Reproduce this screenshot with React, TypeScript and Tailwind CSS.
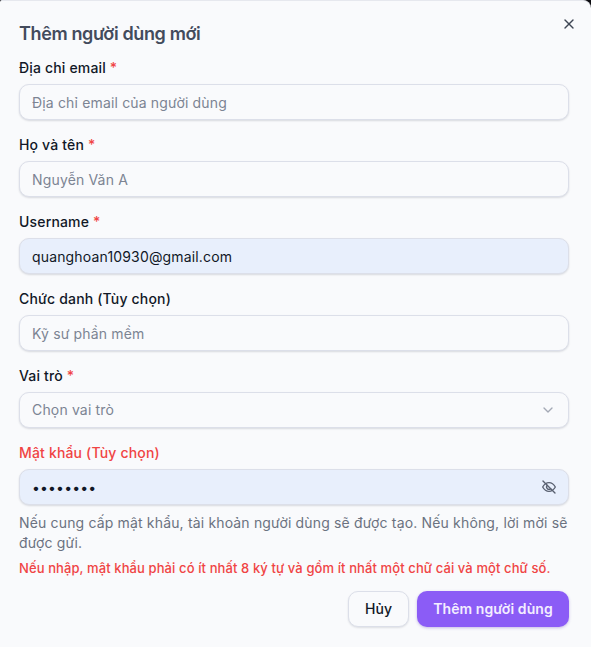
import { ChevronDown, X } from "lucide-react";

function Req() {
  return <span className="text-[#f04444]"> *</span>;
}

const inputBase =
  "h-9 w-full rounded-[10px] border border-[#dcdfe9] px-3 text-sm tracking-[0.16px] text-[#111827] shadow-[0_1px_2px_rgba(15,23,42,0.14)] outline-none placeholder:text-[#7c8493]";
const emptyInput = inputBase + " bg-[#f9fafc]";
const filledInput = inputBase + " bg-[#e8effc]";

function Field({ label, required, placeholder, value }: { label: string; required?: boolean; placeholder?: string; value?: string }) {
  return (
    <div className="flex flex-col gap-[6px]">
      <label className="text-sm leading-[20px] font-[450] tracking-[0.17px] text-[#111827]">
        {label}
        {required && <Req />}
      </label>
      <input className={value ? filledInput : emptyInput} placeholder={placeholder} defaultValue={value} />
    </div>
  );
}

export default function App() {
  return (
    <div className="h-[647px] w-[591px] overflow-hidden bg-[#0b0b0f] font-['Inter',sans-serif]">
      <div className="relative flex h-[647px] flex-col rounded-tl-[2px] rounded-tr-[8px] border-t border-[#e6e8ee] bg-[#f9fafc] px-[19px] pt-[21px]">
        <button className="absolute top-[15px] right-[14px] text-[#3f4654]" aria-label="Đóng">
          <X className="h-4 w-4" />
        </button>
        <h2 className="text-lg leading-[24px] font-semibold tracking-[-0.37px] text-[#434b5c]">Thêm người dùng mới</h2>
        <div className="mt-[12px] flex w-[550px] flex-col gap-[15px]">
          <Field label="Địa chỉ email" required placeholder="Địa chỉ email của người dùng" />
          <Field label="Họ và tên" required placeholder="Nguyễn Văn A" />
          <Field label="Username" required value="quanghoan10930@gmail.com" />
          <Field label="Chức danh (Tùy chọn)" placeholder="Kỹ sư phần mềm" />
          <div className="flex flex-col gap-[6px]">
            <label className="text-sm leading-[20px] font-[450] tracking-[0.17px] text-[#111827]">
              Vai trò
              <Req />
            </label>
            <button className="flex h-9 w-full items-center justify-between rounded-[10px] border border-[#dcdfe9] bg-[#f9fafc] px-3 text-sm tracking-[0.16px] text-[#7c8493] shadow-[0_1px_2px_rgba(15,23,42,0.14)]">
              Chọn vai trò
              <ChevronDown className="h-4 w-4 text-[#a3a9b5]" />
            </button>
          </div>
          <div className="flex flex-col gap-[6px]">
            <label className="text-sm leading-[20px] font-[450] tracking-[0.17px] text-[#f04444]">Mật khẩu (Tùy chọn)</label>
            <div className="relative">
              <input type="password" className={filledInput} defaultValue="12345678" />
              <svg
                className="absolute top-[10px] right-3 h-4 w-4 text-[#596070]"
                viewBox="0 0 24 24"
                fill="none"
                stroke="currentColor"
                strokeWidth="2"
                strokeLinecap="round"
                strokeLinejoin="round"
              >
                <path d="M2.500 12C5 7.500 8.200 5.500 12 5.500s7 2 9.500 6.500c-2.500 4.500-5.700 6.500-9.500 6.500S5 16.500 2.500 12Z" />
                <path d="M9.500 9.500a3.500 3.500 0 0 0 5 5" />
                <path d="M3 3l18 18" />
              </svg>
            </div>
          </div>
        </div>
        <p className="mt-[8px] w-[550px] text-sm leading-[20px] tracking-[0.16px] text-[#6b7280]">
          Nếu cung cấp mật khẩu, tài khoản người dùng sẽ được tạo. Nếu không, lời mời sẽ được gửi.
        </p>
        <p className="mt-[5px] text-[13px] leading-[20px] font-[450] tracking-[0.1px] whitespace-nowrap text-[#f04444]">
          Nếu nhập, mật khẩu phải có ít nhất 8 ký tự và gồm ít nhất một chữ cái và một chữ số.
        </p>
        <div className="mt-[13px] flex w-[550px] justify-end gap-[8px]">
          <button className="h-9 w-[61px] rounded-[10px] border border-[#dcdfe9] bg-[#f9fafc] text-sm font-[450] text-[#111827] shadow-[0_1px_2px_rgba(15,23,42,0.12)]">Hủy</button>
          <button className="h-9 w-[152px] rounded-[10px] bg-[#8b5cf6] text-sm font-semibold tracking-[0.1px] text-[#f3eeff] shadow-[0_1px_3px_rgba(80,40,180,0.3)]">Thêm người dùng</button>
        </div>
      </div>
    </div>
  );
}
